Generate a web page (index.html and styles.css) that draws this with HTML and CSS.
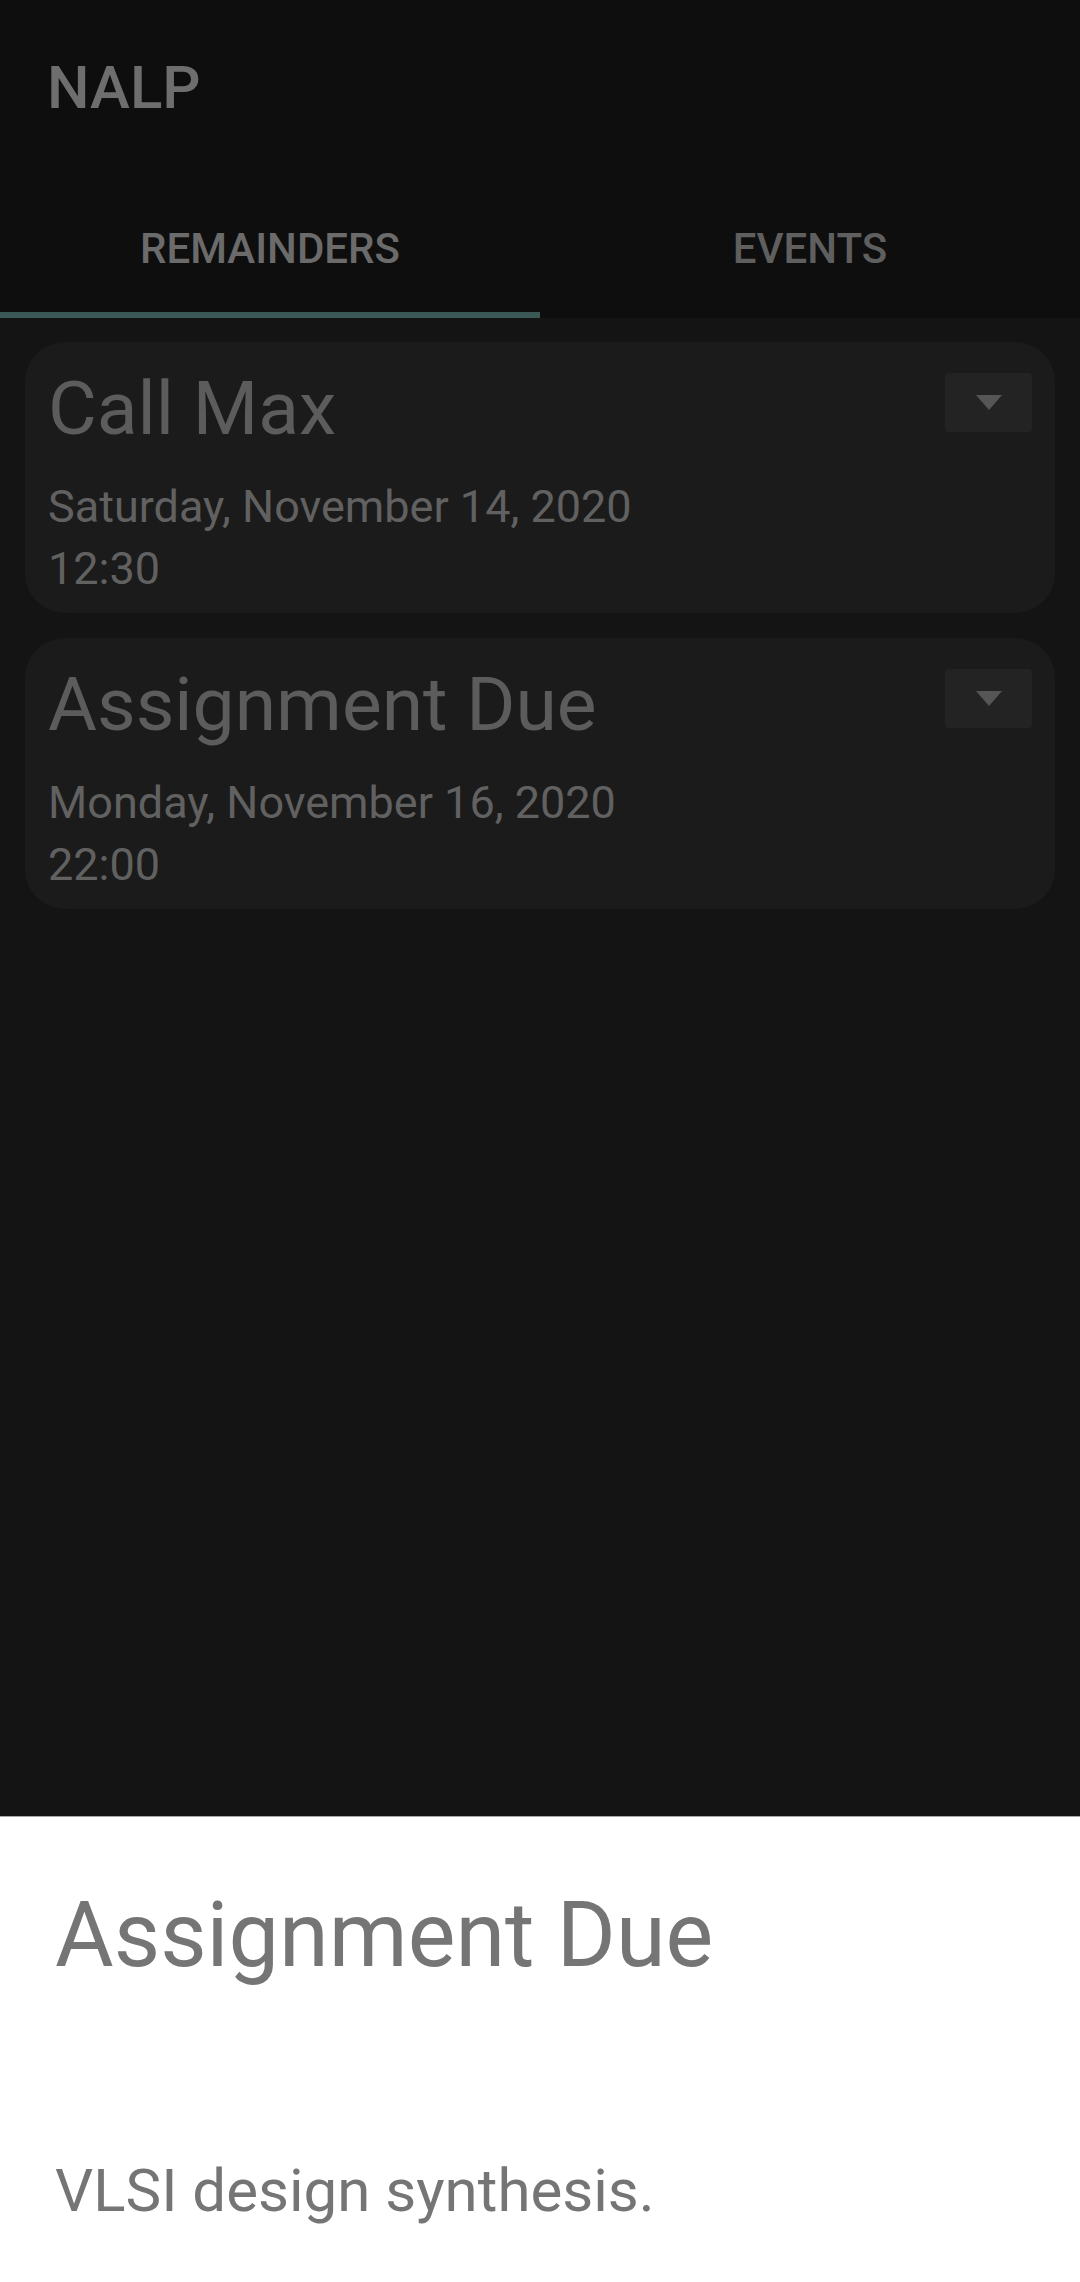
FILE: index.html
```html
<!DOCTYPE html>
<html lang="en">
<head>
<meta charset="utf-8">
<title>NALP</title>
<link rel="stylesheet" href="styles.css">
</head>
<body>
<div class="screen">
  <header class="appbar">
    <div class="toolbar"><h1 class="app-title">NALP</h1></div>
    <nav class="tabs">
      <div class="tab tab-active">REMAINDERS</div>
      <div class="tab">EVENTS</div>
    </nav>
  </header>
  <main class="list">
    <article class="card">
      <div class="card-head">
        <h2 class="card-title">Call Max</h2>
        <button class="drop-btn" aria-label="More"><svg width="26" height="15" viewBox="0 0 26 15"><path d="M0 0 L26 0 L13 15 Z" fill="#565656"/></svg></button>
      </div>
      <div class="card-date">Saturday, November 14, 2020</div>
      <div class="card-date">12:30</div>
    </article>
    <article class="card">
      <div class="card-head">
        <h2 class="card-title">Assignment Due</h2>
        <button class="drop-btn" aria-label="More"><svg width="26" height="15" viewBox="0 0 26 15"><path d="M0 0 L26 0 L13 15 Z" fill="#565656"/></svg></button>
      </div>
      <div class="card-date">Monday, November 16, 2020</div>
      <div class="card-date">22:00</div>
    </article>
  </main>
  <section class="sheet">
    <h2 class="sheet-title">Assignment Due</h2>
    <p class="sheet-body">VLSI design synthesis.</p>
  </section>
</div>
</body>
</html>
```

FILE: styles.css
```css
* { box-sizing: border-box; }
html, body { margin: 0; padding: 0; }
body {
  font-family: Roboto, "Noto Sans", "Liberation Sans", sans-serif;
  background: #141414;
}
.screen {
  width: 1080px;
  height: 2282px;
  display: flex;
  flex-direction: column;
  overflow: hidden;
}
.appbar {
  background: #0e0e0e;
}
.toolbar {
  height: 176px;
  padding-left: 47px;
}
.app-title {
  margin: 0;
  font-size: 60px;
  line-height: 176px;
  font-weight: 500;
  color: #6e6e6e;
}
.tabs {
  display: flex;
  height: 142px;
}
.tab {
  flex: 1;
  text-align: center;
  font-size: 42px;
  font-weight: 500;
  line-height: 127px;
  padding-top: 9px;
  color: #5f5f5f;
  border-bottom: 6px solid transparent;
}
.tab-active {
  color: #6b6b6b;
  border-bottom-color: #3a5855;
}
.list {
  flex: 1;
  padding: 24px 25px 0;
  display: flex;
  flex-direction: column;
  gap: 25px;
}
.card {
  background: #1b1b1b;
  border-radius: 40px;
  padding: 22px 23px 13px 23px;
}
.card-head {
  display: flex;
  justify-content: space-between;
  align-items: flex-start;
}
.card-title {
  margin: 0;
  font-size: 75px;
  line-height: 88px;
  font-weight: 400;
  color: #5c5c5c;
}
.drop-btn {
  margin-top: 9px;
  width: 87px;
  height: 59px;
  border: none;
  border-radius: 4px;
  background: #232323;
  display: flex;
  align-items: center;
  justify-content: center;
  padding: 0;
}
.card-date {
  font-size: 45px;
  line-height: 62px;
  color: #616161;
}
.card-head + .card-date {
  margin-top: 24px;
}
.sheet {
  height: 466px;
  flex: none;
  background: #ffffff;
  border-top: 1px solid #a8a8a8;
  padding: 66px 55px 0;
}
.sheet-title {
  margin: 0;
  font-size: 90px;
  line-height: 106px;
  font-weight: 400;
  color: #757575;
}
.sheet-body {
  margin: 167px 0 0;
  font-size: 60px;
  line-height: 70px;
  color: #757575;
}
```
